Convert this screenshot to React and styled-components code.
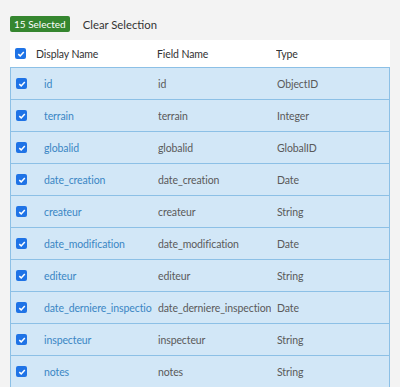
import React from "react";
import styled, { createGlobalStyle } from "styled-components";

const Global = createGlobalStyle`
  body {
    margin: 0;
    background: #f3f3f3;
    font-family: Lato, "Open Sans", "Liberation Sans", sans-serif;
  }
`;

const Page = styled.div`
  padding: 16px 10px 0 10px;
  height: 387px;
  box-sizing: border-box;
  overflow: hidden;
`;

const Toolbar = styled.div`
  display: flex;
  align-items: center;
  gap: 13px;
  height: 16px;
  margin-bottom: 8px;
`;

const Badge = styled.span`
  background: #35862f;
  color: #fff;
  font-size: 10px;
  line-height: 16px;
  padding: 0 4px;
  border-radius: 2px;
`;

const ClearButton = styled.span`
  color: #333;
  font-size: 11.3px;
`;

const Table = styled.div`
  background: #fff;
  width: 380px;
`;

const Row = styled.div`
  display: grid;
  grid-template-columns: 26px 121px 119px 1fr;
  align-items: center;
  height: ${p => (p.$header ? "27px" : "31px")};
  background: ${p => (p.$header ? "#fff" : "#d2e7f7")};
  border: ${p => (p.$header ? "none" : "1px solid #8cc0e6")};
  border-top: ${p => (p.$first ? "1px solid #8cc0e6" : "none")};
  font-size: 10.5px;
  letter-spacing: -0.1px;
`;

const Check = styled.span`
  width: 11px;
  height: 11px;
  margin-left: 5px;
  background: #1f73e6;
  border-radius: 2px;
  display: flex;
  align-items: center;
  justify-content: center;
`;

const Cell = styled.span`
  color: ${p => p.$color || "#5a5a5a"};
  white-space: nowrap;
  overflow: hidden;
  min-width: 0;
  margin-left: ${p => p.$indent || 0}px;
  margin-right: 6px;
`;

const Tick = () => (
  <Check>
    <svg width="8" height="8" viewBox="0 0 10 10">
      <path d="M1.6 5.2 L4 7.4 L8.5 2.5" fill="none" stroke="#fff" strokeWidth="1.9" />
    </svg>
  </Check>
);

const fields = [
  ["id", "id", "ObjectID"],
  ["terrain", "terrain", "Integer"],
  ["globalid", "globalid", "GlobalID"],
  ["date_creation", "date_creation", "Date"],
  ["createur", "createur", "String"],
  ["date_modification", "date_modification", "Date"],
  ["editeur", "editeur", "String"],
  ["date_derniere_inspection", "date_derniere_inspection", "Date"],
  ["inspecteur", "inspecteur", "String"],
  ["notes", "notes", "String"],
  ["", "", ""],
];

export default function App() {
  return (
    <Page>
      <Global />
      <Toolbar>
        <Badge>15 Selected</Badge>
        <ClearButton>Clear Selection</ClearButton>
      </Toolbar>
      <Table>
        <Row $header>
          <Tick />
          <Cell $color="#333">Display Name</Cell>
          <Cell $color="#333">Field Name</Cell>
          <Cell $color="#333">Type</Cell>
        </Row>
        {fields.map((f, i) => (
          <Row key={i} $first={i === 0}>
            <Tick />
            <Cell $color="#3a86c4" $indent={7}>{f[0]}</Cell>
            <Cell>{f[1]}</Cell>
            <Cell>{f[2]}</Cell>
          </Row>
        ))}
      </Table>
    </Page>
  );
}
